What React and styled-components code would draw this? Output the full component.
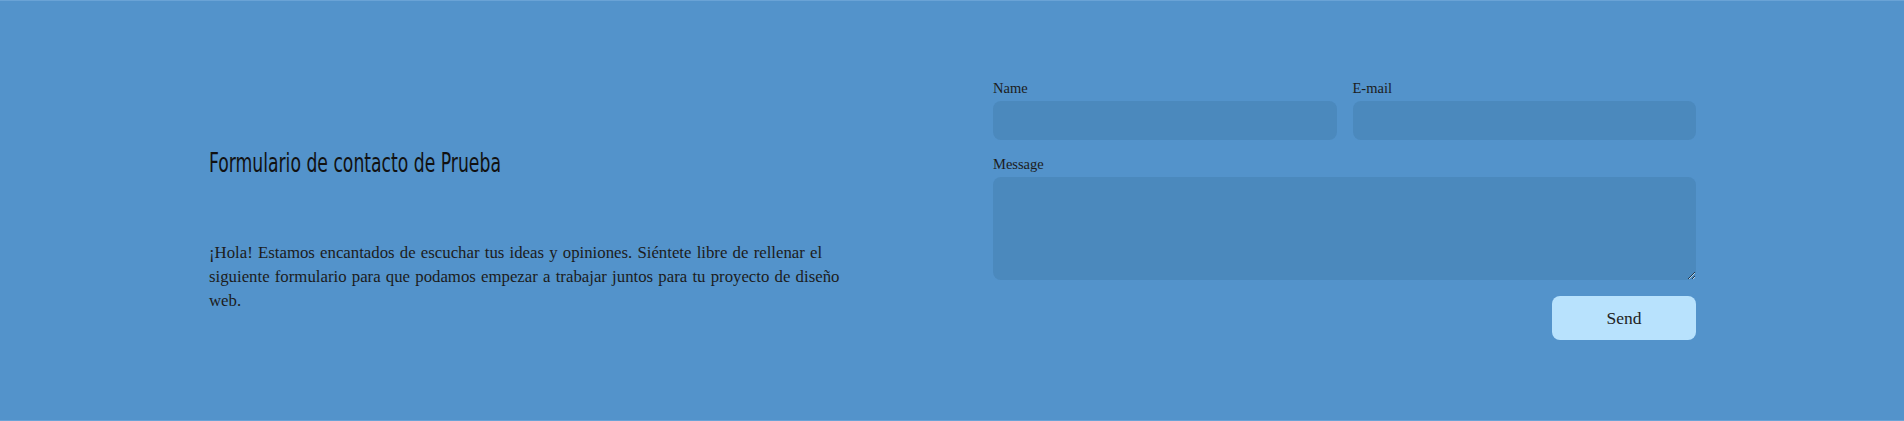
import React from "react";
import styled, { createGlobalStyle } from "styled-components";

const Global = createGlobalStyle`
  html, body { margin: 0; padding: 0; background: #5393cb; }
  * { box-sizing: border-box; }
`;

const Section = styled.section`
  height: 421px;
  background: #5393cb;
  border-top: 1px solid #6aa3d6;
  border-bottom: 1px solid #6aa3d6;
  padding: 79px 208px 0 209px;
  display: grid;
  grid-template-columns: 703px 703px;
  column-gap: 81px;
  align-items: start;
  font-family: "Liberation Serif", "DejaVu Serif", serif;
  color: #1c1c1c;
`;

const Intro = styled.div`
  padding-top: 70px;
`;

const Heading = styled.h2`
  margin: 0;
  font-family: "DejaVu Sans Condensed", "Liberation Sans", sans-serif;
  font-weight: 400;
  font-size: 22px;
  line-height: 28px;
  color: #111;
  white-space: nowrap;
  transform: scale(0.87, 1.18);
  transform-origin: left center;
`;

const Text = styled.p`
  margin: 63px 0 0;
  font-size: 16.8px;
  line-height: 24px;
  color: #1c1c1c;
  white-space: nowrap;
  word-spacing: 1px;
`;

const Form = styled.form`
  display: grid;
  grid-template-columns: 1fr 1fr;
  column-gap: 16px;
  row-gap: 16px;
`;

const Field = styled.label`
  display: flex;
  flex-direction: column;
  gap: 5px;
  font-size: 14.5px;
  line-height: 16px;
  color: #1c1c1c;
  grid-column: ${(p) => (p.$wide ? "1 / -1" : "auto")};
`;

const Input = styled.input`
  height: 39px;
  border: none;
  border-radius: 8px;
  background: #4b89bd;
  outline: none;
  font: inherit;
  padding: 0 12px;
`;

const Area = styled.textarea`
  height: 103px;
  border: none;
  border-radius: 8px;
  background: #4b89bd;
  outline: none;
  font: inherit;
  padding: 10px 12px;
  resize: vertical;
`;

const Actions = styled.div`
  grid-column: 1 / -1;
  display: flex;
  justify-content: flex-end;
`;

const Button = styled.button`
  width: 144px;
  height: 44px;
  border: none;
  border-radius: 8px;
  background: #b8e2fd;
  color: #222;
  font-family: "Liberation Serif", "DejaVu Serif", serif;
  font-size: 17.5px;
  cursor: pointer;
`;

export default function App() {
  return (
    <>
      <Global />
      <Section>
        <Intro>
          <Heading>Formulario de contacto de Prueba</Heading>
          <Text>
            ¡Hola! Estamos encantados de escuchar tus ideas y opiniones. Siéntete libre de rellenar el
            <br />
            siguiente formulario para que podamos empezar a trabajar juntos para tu proyecto de diseño
            <br />
            web.
          </Text>
        </Intro>
        <Form onSubmit={(e) => e.preventDefault()}>
          <Field>
            Name
            <Input type="text" />
          </Field>
          <Field>
            E-mail
            <Input type="email" />
          </Field>
          <Field $wide>
            Message
            <Area />
          </Field>
          <Actions>
            <Button type="submit">Send</Button>
          </Actions>
        </Form>
      </Section>
    </>
  );
}
